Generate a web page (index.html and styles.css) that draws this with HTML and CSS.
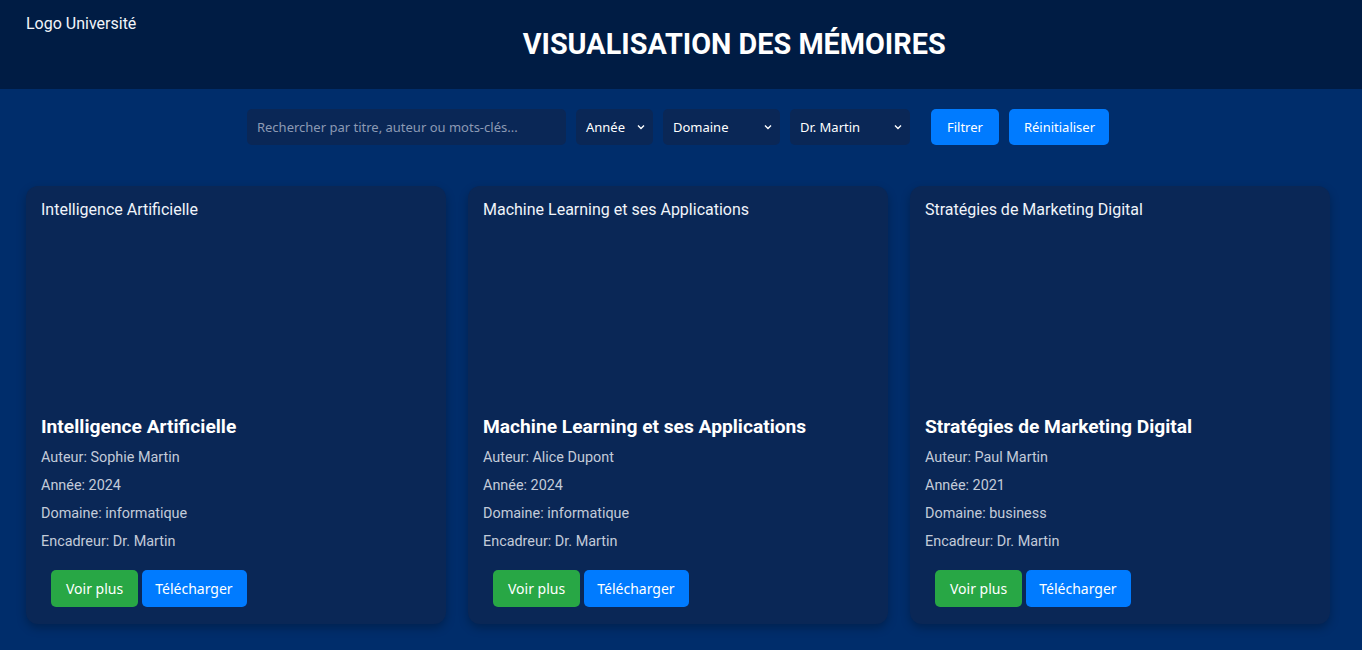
FILE: index.html
```html
<!DOCTYPE html>
<html lang="fr">
<head>
<meta charset="utf-8">
<title>Visualisation des mémoires</title>
<link rel="stylesheet" href="styles.css">
</head>
<body>
<header class="header">
  <div class="logo">Logo Université</div>
  <h1 class="title">VISUALISATION DES MÉMOIRES</h1>
</header>
<main class="main">
  <div class="filters">
    <div class="search">Rechercher par titre, auteur ou mots-clés...</div>
    <div class="select sel-year"><span>Année</span><svg width="8" height="6" viewBox="0 0 8 6"><path d="M1 1.5 L4 4.5 L7 1.5" fill="none" stroke="#fff" stroke-width="1.4"/></svg></div>
    <div class="select sel-domain"><span>Domaine</span><svg width="8" height="6" viewBox="0 0 8 6"><path d="M1 1.5 L4 4.5 L7 1.5" fill="none" stroke="#fff" stroke-width="1.4"/></svg></div>
    <div class="select sel-sup"><span>Dr. Martin</span><svg width="8" height="6" viewBox="0 0 8 6"><path d="M1 1.5 L4 4.5 L7 1.5" fill="none" stroke="#fff" stroke-width="1.4"/></svg></div>
    <button class="btn btn-blue btn-filter">Filtrer</button>
    <button class="btn btn-blue btn-reset">Réinitialiser</button>
  </div>
  <div class="cards">
    <div class="card">
      <div class="thumb">Intelligence Artificielle</div>
      <h3 class="card-title">Intelligence Artificielle</h3>
      <p class="meta">Auteur: Sophie Martin</p>
      <p class="meta">Année: 2024</p>
      <p class="meta">Domaine: informatique</p>
      <p class="meta">Encadreur: Dr. Martin</p>
      <div class="actions"><button class="btn btn-green">Voir plus</button><button class="btn btn-blue">Télécharger</button></div>
    </div>
    <div class="card">
      <div class="thumb">Machine Learning et ses Applications</div>
      <h3 class="card-title">Machine Learning et ses Applications</h3>
      <p class="meta">Auteur: Alice Dupont</p>
      <p class="meta">Année: 2024</p>
      <p class="meta">Domaine: informatique</p>
      <p class="meta">Encadreur: Dr. Martin</p>
      <div class="actions"><button class="btn btn-green">Voir plus</button><button class="btn btn-blue">Télécharger</button></div>
    </div>
    <div class="card">
      <div class="thumb">Stratégies de Marketing Digital</div>
      <h3 class="card-title">Stratégies de Marketing Digital</h3>
      <p class="meta">Auteur: Paul Martin</p>
      <p class="meta">Année: 2021</p>
      <p class="meta">Domaine: business</p>
      <p class="meta">Encadreur: Dr. Martin</p>
      <div class="actions"><button class="btn btn-green">Voir plus</button><button class="btn btn-blue">Télécharger</button></div>
    </div>
  </div>
</main>
</body>
</html>
```

FILE: styles.css
```css
* { box-sizing: border-box; }
html, body { margin: 0; padding: 0; }
body {
  background: #002d6b;
  font-family: Roboto, "Liberation Sans", sans-serif;
  color: #fff;
  height: 650px;
  overflow: hidden;
}
.header {
  background: #001c44;
  height: 89px;
  display: flex;
  align-items: flex-start;
  padding: 0 30px 0 26px;
}
.logo {
  font-size: 16px;
  line-height: 19px;
  margin-top: 14px;
  color: #f2f5fa;
}
.title {
  flex: 1;
  text-align: center;
  margin: 27px 0 0;
  font-size: 28.8px;
  line-height: 34px;
  font-weight: 700;
  letter-spacing: 0;
}
.main { padding: 0; }
.filters {
  display: flex;
  justify-content: center;
  align-items: center;
  gap: 10px;
  margin-top: 20px;
  height: 36px;
  padding-right: 6px;
  font-family: "Noto Sans", "Open Sans", sans-serif;
  font-size: 13px;
}
.search {
  width: 319px;
  height: 36px;
  background: #0a2756;
  border-radius: 5px;
  padding: 0 10px;
  display: flex;
  align-items: center;
  color: #8c9ab4;
  font-size: 13px;
}
.select {
  height: 36px;
  background: #0a2756;
  border-radius: 5px;
  padding: 0 6px 0 10px;
  display: flex;
  align-items: center;
  justify-content: space-between;
  color: #fff;
}
.select svg { margin-right: 2px; }
.sel-year { width: 77px; }
.sel-domain { width: 117px; }
.sel-sup { width: 120px; }
.btn {
  border: none;
  border-radius: 5px;
  color: #fff;
  font-family: "Noto Sans", "Open Sans", sans-serif;
  cursor: pointer;
}
.filters .btn {
  height: 36px;
  font-size: 13px;
  padding: 0 16px;
}
.filters .btn-reset { padding: 0 14px 0 15px; }
.btn-filter { margin-left: 11px; }
.btn-blue { background: #007bff; }
.btn-green { background: #28a745; }
.cards {
  display: grid;
  grid-template-columns: repeat(3, 420px);
  gap: 22px;
  padding-left: 26px;
  margin-top: 41px;
}
.card {
  background: #0a2756;
  border-radius: 12px;
  padding: 15px 15px 17px;
  box-shadow: 0 4px 10px rgba(0, 0, 0, 0.25);
  height: 438px;
}
.thumb {
  height: 200px;
  padding-top: 1px;
  font-size: 16px;
  line-height: 16px;
  color: #f0f4fa;
}
.card-title {
  margin: 14px 0 11px;
  font-size: 19.2px;
  line-height: 23px;
  font-weight: 700;
}
.meta {
  margin: 10px 0;
  font-size: 14.4px;
  line-height: 18px;
  color: #c3cbd9;
}
.actions {
  display: flex;
  gap: 4px;
  margin: 19px 0 0 10px;
}
.actions .btn {
  height: 37px;
  padding: 0 15px;
  font-size: 14px;
}
.actions .btn-blue { padding: 0 14px 0 13px; }
```
